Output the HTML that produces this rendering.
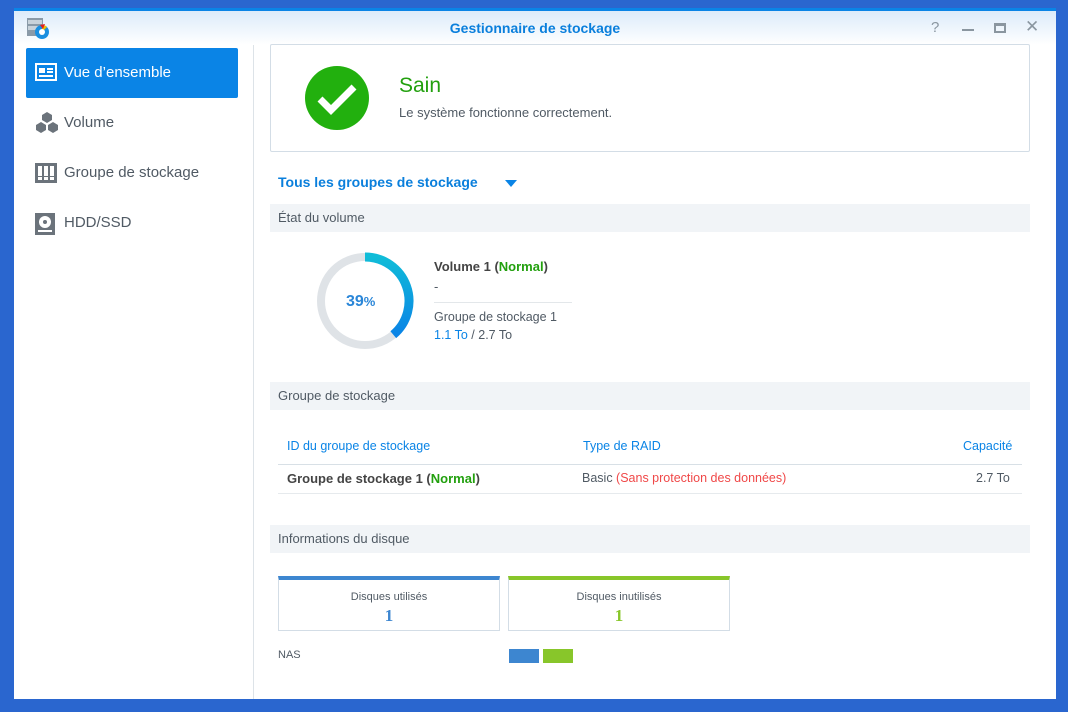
<!DOCTYPE html>
<html><head><meta charset="utf-8"><style>
*{margin:0;padding:0;box-sizing:border-box}
body{width:1068px;height:712px;background:#2a66cf;font-family:"Liberation Sans",sans-serif;position:relative;overflow:hidden;color:#505a64}
.win{position:absolute;left:14px;top:8px;width:1042px;height:691px;background:#fff;border-top:3px solid #0a84e6;overflow:hidden}
.tb{position:absolute;left:0;top:0;width:100%;height:34px;background:linear-gradient(#dcebfa,#fff)}
.title{position:absolute;left:0;width:100%;top:9px;text-align:center;font-size:14px;font-weight:bold;color:#0a7fdc}
.a{position:absolute;white-space:nowrap}
.nav{position:absolute;left:12px;width:212px;height:50px;font-size:15px;color:#505a64}
.nav span{position:absolute;left:38px;top:16px}
.nav svg{position:absolute;left:9px;top:15px}
.sec{position:absolute;left:270px;width:760px;height:28px;background:#f1f4f7;font-size:13px;color:#505a64;padding:6px 8px}
.card{position:absolute;top:576px;height:55px;width:222px;border:1px solid #d3dde6;text-align:center;font-size:11px;color:#505a64}
</style></head><body>
<div class="win">
<div class="tb"></div>
<div class="title">Gestionnaire de stockage</div>
<svg class="a" style="left:12px;top:6px" width="24" height="24" viewBox="0 0 24 24"><rect x="1" y="1" width="16" height="18" fill="#8a9aa8"/><rect x="2" y="3" width="14" height="4" fill="#c8d2da"/><rect x="2" y="9" width="14" height="4" fill="#c8d2da"/><circle cx="16" cy="15" r="7" fill="#1a8fe0"/><path d="M16 15L16 8A7 7 0 0 1 21 10Z" fill="#f0c000"/><path d="M14 8L19 7L17 12Z" fill="#e02020"/><circle cx="16" cy="15" r="3" fill="#fff"/></svg>
<div class="a" style="left:917px;top:8px;font-size:15px;color:#8a96a0">?</div>
<div class="a" style="left:948px;top:18px;width:12px;height:2px;background:#8a96a0"></div>
<div class="a" style="left:980px;top:12px;width:12px;height:10px;border:2px solid #8a96a0;border-top-width:3px"></div>
<div class="a" style="left:1011px;top:6px;font-size:17px;color:#8a96a0">✕</div>
<div class="a" style="left:239px;top:34px;width:1px;height:660px;background:#dde3e8"></div>
</div>
<div class="nav" style="left:26px;top:48px;background:#0a84e6;color:#fff;border-radius:2px"><svg width="22" height="18" viewBox="0 0 22 18"><rect x="1" y="1" width="20" height="16" fill="none" stroke="#fff" stroke-width="2"/><rect x="4" y="5" width="6" height="5" fill="#fff"/><rect x="12" y="5" width="6" height="2" fill="#fff"/><rect x="12" y="8" width="6" height="2" fill="#fff"/><rect x="4" y="12" width="14" height="2" fill="#fff"/></svg><span>Vue d’ensemble</span></div>
<div class="nav" style="left:26px;top:98px"><svg width="24" height="24" viewBox="0 0 24 24" style="top:13px"><path d="M12 1l5 3v5l-5 3-5-3V4z M6 11l5 3v5l-5 3-5-3v-5z M18 11l5 3v5l-5 3-5-3v-5z" fill="#6b737b"/></svg><span>Volume</span></div>
<div class="nav" style="left:26px;top:148px"><svg width="22" height="20" viewBox="0 0 22 20"><rect x="0" y="0" width="22" height="20" fill="#6b737b"/><rect x="3" y="3" width="4" height="14" fill="#fff"/><rect x="9" y="3" width="4" height="14" fill="#fff"/><rect x="15" y="3" width="4" height="14" fill="#fff"/><rect x="3" y="13" width="16" height="1" fill="#6b737b"/></svg><span>Groupe de stockage</span></div>
<div class="nav" style="left:26px;top:198px"><svg width="20" height="22" viewBox="0 0 20 22"><rect x="0" y="0" width="20" height="22" fill="#6b737b"/><circle cx="10" cy="9" r="6" fill="#fff"/><circle cx="10" cy="9" r="2" fill="#6b737b"/><rect x="3" y="17" width="14" height="2" fill="#fff"/></svg><span>HDD/SSD</span></div>

<div class="a" style="left:270px;top:44px;width:760px;height:108px;border:1px solid #d3dde6;border-radius:2px"></div>
<svg class="a" style="left:305px;top:66px" width="64" height="64" viewBox="0 0 64 64"><circle cx="32" cy="32" r="32" fill="#22b00e"/><path d="M15 33l11 11 23-23" fill="none" stroke="#fff" stroke-width="7"/></svg>
<div class="a" style="left:399px;top:74px;font-size:21px;color:#22a00e">Sain</div>
<div class="a" style="left:399px;top:105px;font-size:13px">Le système fonctionne correctement.</div>
<div class="a" style="left:278px;top:174px;font-size:14px;font-weight:bold;color:#0a7fdc">Tous les groupes de stockage</div>
<div class="a" style="left:505px;top:180px;border-left:6px solid transparent;border-right:6px solid transparent;border-top:7px solid #0a84e6"></div>
<div class="sec" style="top:204px">État du volume</div>
<svg class="a" style="left:316px;top:252px" width="98" height="98" viewBox="0 0 98 98"><defs><linearGradient id="g" x1="0" y1="0" x2="0" y2="1"><stop offset="0" stop-color="#10bcd8"/><stop offset="1" stop-color="#0a84e6"/></linearGradient></defs><circle cx="49" cy="49" r="44" fill="none" stroke="#dfe3e7" stroke-width="8"/><path d="M49 5A44 44 0 0 1 77.3 82.7" fill="none" stroke="url(#g)" stroke-width="9"/></svg>
<div class="a" style="left:346px;top:293px;font-size:16px;font-weight:bold;color:#2a86d8">39<span style="font-size:13px">%</span></div>
<div class="a" style="left:434px;top:259px;font-size:13px;font-weight:bold;color:#444">Volume 1 (<span style="color:#22a00e">Normal</span>)</div>
<div class="a" style="left:434px;top:279px;font-size:13px">-</div>
<div class="a" style="left:434px;top:302px;width:138px;height:1px;background:#e3e7ea"></div>
<div class="a" style="left:434px;top:310px;font-size:12.5px">Groupe de stockage 1</div>
<div class="a" style="left:434px;top:328px;font-size:12.5px"><span style="color:#0a84e6">1.1 To</span> / 2.7 To</div>
<div class="sec" style="top:382px">Groupe de stockage</div>
<div class="a" style="left:287px;top:439px;font-size:12.5px;color:#0a84e6">ID du groupe de stockage</div>
<div class="a" style="left:583px;top:439px;font-size:12.5px;color:#0a84e6">Type de RAID</div>
<div class="a" style="left:963px;top:439px;font-size:12.5px;color:#0a84e6">Capacité</div>
<div class="a" style="left:278px;top:464px;width:744px;height:1px;background:#d8e0e6"></div>
<div class="a" style="left:287px;top:471px;font-size:13px;font-weight:bold;color:#444">Groupe de stockage 1 (<span style="color:#22a00e">Normal</span>)</div>
<div class="a" style="left:582px;top:471px;font-size:12.5px">Basic <span style="color:#f04848">(Sans protection des données)</span></div>
<div class="a" style="left:976px;top:471px;font-size:12.5px">2.7 To</div>
<div class="a" style="left:278px;top:493px;width:744px;height:1px;background:#e6eaed"></div>
<div class="sec" style="top:525px">Informations du disque</div>
<div class="card" style="left:278px;border-top:4px solid #3d86d0"><div style="margin-top:11px">Disques utilisés</div><div style="font-size:17px;font-weight:bold;color:#3d86d0;font-family:'Liberation Serif',serif;margin-top:3px">1</div></div>
<div class="card" style="left:508px;border-top:4px solid #88c62a"><div style="margin-top:11px">Disques inutilisés</div><div style="font-size:17px;font-weight:bold;color:#88c62a;font-family:'Liberation Serif',serif;margin-top:3px">1</div></div>
<div class="a" style="left:278px;top:649px;font-size:11px">NAS</div>
<div class="a" style="left:509px;top:649px;width:30px;height:14px;background:#3d86d0"></div>
<div class="a" style="left:543px;top:649px;width:30px;height:14px;background:#88c62a"></div>
</body></html>
